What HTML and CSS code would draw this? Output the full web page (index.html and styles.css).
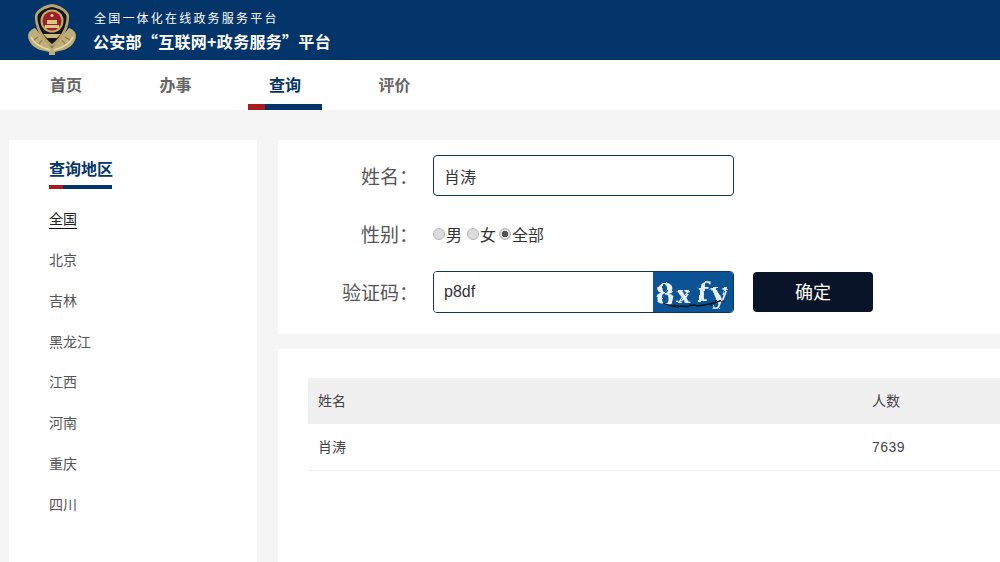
FILE: index.html
```html
<!DOCTYPE html>
<html lang="zh-CN">
<head>
    <meta charset="UTF-8" />
    <title>公安部“互联网+政务服务”平台</title>
    <link rel="stylesheet" href="styles.css">
</head>
<body>

    <header class="top-bar">
        <svg class="emblem" width="50" height="52" viewBox="0 0 50 52">
            <path d="M1 31C2 27 5 25 8 24L25 44L42 24C45 25 48 27 49 31C49 39 42 46 32 47L28 48V51H22V48L18 47C8 46 1 39 1 31Z" fill="#bfae78"/>
            <path d="M4 33C8 41 15 44 23 46M46 33C42 41 35 44 27 46" stroke="#e8dcae" stroke-width="1.6" fill="none"/>
            <path d="M7 36L11 33M12 40L15 36M38 33L43 36M35 36L38 40" stroke="#8d7c4a" stroke-width="1.2"/>
            <path d="M25 0C32 1 40 5 42 11C43 23 36 36 25 43C14 36 7 23 8 11C10 5 18 1 25 0Z" fill="#b7a56c"/>
            <path d="M25 3C31 4 38 7 39.500 12C40 22 34 33 25 40C16 33 10 22 10.500 12C12 7 19 4 25 3Z" fill="#14131c"/>
            <circle cx="25" cy="17" r="11.500" fill="#c4ab66"/>
            <circle cx="25" cy="17" r="9.500" fill="#9c1f2a"/>
            <path d="M18 21H32V24H18ZM20 16H30V20H20Z" fill="#dcc785"/>
            <circle cx="25" cy="11.500" r="1.600" fill="#e6d28e"/>
            <path d="M16 30H34L30 34H20Z" fill="#cdb97c"/>
        </svg>
        <div class="site-name">
            <p class="site-sub">全国一体化在线政务服务平台</p>
            <p class="site-title">公安部“互联网+政务服务”平台</p>
        </div>
    </header>

    <nav class="main-nav">
        <a href="#">首页</a>
        <a href="#">办事</a>
        <a href="#" class="active">查询</a>
        <a href="#">评价</a>
    </nav>

    <div class="page">
        <aside class="sidebar">
            <h2>查询地区</h2>
            <ul class="area-list">
                <li class="current">全国</li>
                <li>北京</li>
                <li>吉林</li>
                <li>黑龙江</li>
                <li>江西</li>
                <li>河南</li>
                <li>重庆</li>
                <li>四川</li>
            </ul>
        </aside>

        <main class="content">
            <section class="search-panel">
                <div class="form-row">
                    <label for="name">姓名：</label>
                    <input type="text" id="name" class="name-input" value="肖涛">
                </div>
                <div class="form-row gender-row">
                    <label>性别：</label>
                    <div class="radios">
                        <input type="radio" name="gender" id="male"><label for="male">男</label>
                        <input type="radio" name="gender" id="female"><label for="female">女</label>
                        <input type="radio" name="gender" id="all" checked><label for="all">全部</label>
                    </div>
                </div>
                <div class="form-row captcha-row">
                    <label for="code">验证码：</label>
                    <div class="captcha-box">
                        <input type="text" id="code" value="p8df">
                        <svg class="captcha" width="80" height="40" viewBox="0 0 80 40">
                            <defs>
                                <filter id="rough" x="-5%" y="-5%" width="110%" height="110%">
                                    <feTurbulence type="fractalNoise" baseFrequency="0.09" numOctaves="2" seed="4"/>
                                    <feDisplacementMap in="SourceGraphic" scale="5"/>
                                </filter>
                            </defs>
                            <rect width="80" height="40" fill="#0b5394"/>
                            <g filter="url(#rough)">
                                <text x="2" y="32" class="captcha-text big">8</text>
                                <text x="24" y="31" class="captcha-text">x</text>
                                <text x="44" y="30" class="captcha-text big">f</text>
                                <text x="58" y="31" class="captcha-text big">y</text>
                                <path d="M10 31C26 36 48 36 70 28" stroke="#10141c" stroke-width="1.800" fill="none"/>
                            </g>
                        </svg>
                    </div>
                    <button>确定</button>
                </div>
            </section>

            <section class="result-panel">
                <table>
                    <thead>
                        <tr><th class="col-name">姓名</th><th>人数</th></tr>
                    </thead>
                    <tbody>
                        <tr><td>肖涛</td><td class="num">7639</td></tr>
                    </tbody>
                </table>
            </section>
        </main>
    </div>

</body>
</html>
```

FILE: styles.css
```css
* {
    box-sizing: border-box;
    margin: 0;
    padding: 0;
    font-family: "Liberation Sans", "Noto Sans CJK SC", sans-serif;
}

html, body {
    height: 562px;
    overflow: hidden;
}

body {
    background: #f5f5f5;
    color: #333;
}

.top-bar {
    display: flex;
    align-items: center;
    height: 60px;
    padding-left: 27px;
    background: #03346a;
    color: #fff;
}

.emblem {
    flex: none;
    margin-right: 16px;
}

.site-name {
    padding-top: 2px;
}

.site-sub {
    font-size: 12px;
    line-height: 16px;
    letter-spacing: 2.2px;
    margin-left: 1px;
}

.site-title {
    font-family: "Noto Sans CJK SC", sans-serif;
    font-size: 16px;
    line-height: 22px;
    font-weight: bold;
    letter-spacing: 0.3px;
    margin-top: 3px;
}

.main-nav {
    display: flex;
    gap: 35.5px;
    height: 50px;
    padding-left: 29px;
    background: #fff;
}

.main-nav a {
    position: relative;
    width: 74px;
    font-size: 16px;
    font-weight: bold;
    line-height: 51px;
    text-align: center;
    text-decoration: none;
    color: #666;
}

.main-nav a.active {
    color: #03346a;
}

.main-nav a.active::after {
    content: "";
    position: absolute;
    left: 0;
    right: 0;
    bottom: 0;
    height: 6px;
    background: linear-gradient(90deg, #a81c1f 17px, #03346a 17px);
}

.page {
    display: flex;
    gap: 21px;
    padding: 30px 0 0 9px;
}

.sidebar {
    flex: none;
    width: 248px;
    height: 422px;
    padding: 20px 0 0 40px;
    background: #fff;
}

.sidebar h2 {
    width: 63px;
    padding-bottom: 5px;
    border-bottom: 4px solid;
    border-image: linear-gradient(90deg, #a81c1f 15px, #03346a 15px) 1;
    font-size: 16px;
    line-height: 20px;
    white-space: nowrap;
    color: #03346a;
}

.area-list {
    list-style: none;
}

.area-list li {
    width: max-content;
    margin-top: 20.75px;
    font-size: 14px;
    line-height: 20px;
    color: #555;
}

.area-list li.current {
    margin-top: 21px;
    margin-bottom: 21px;
    border-bottom: 1px solid #111;
    color: #222;
    line-height: 18px;
}

.area-list li.current + li {
    margin-top: 0;
}

.content {
    flex: 1;
    min-width: 0;
    display: flex;
    flex-direction: column;
    gap: 15px;
}

.search-panel {
    height: 194px;
    padding-top: 15px;
    background: #fff;
}

.form-row {
    display: flex;
    align-items: center;
}

.form-row > label {
    width: 140px;
    margin-right: 15px;
    font-size: 19px;
    color: #555;
    text-align: right;
}

.gender-row > label,
.captcha-row > label {
    padding-bottom: 2px;
}

.name-input {
    width: 301px;
    height: 41px;
    padding: 0 10px;
    border: 1px solid #0f3557;
    border-radius: 4px;
    font-size: 16px;
    color: #333;
    outline: none;
}

.gender-row {
    height: 26px;
    margin-top: 25px;
}

.radios {
    display: flex;
    align-items: center;
    font-size: 16px;
    color: #333;
}

.radios input {
    appearance: none;
    width: 12px;
    height: 12px;
    margin-right: 1px;
    border: 1px solid #b5b5b5;
    border-radius: 50%;
    background: #dcdcdc;
}

.radios input:checked {
    background: radial-gradient(circle, #555 0 3px, #dcdcdc 3.5px);
}

.radios label {
    margin-right: 5px;
}

.radios label[for="female"] {
    margin-right: 3px;
}

.captcha-row {
    margin-top: 24px;
}

.captcha-box {
    display: flex;
    width: 301px;
    height: 42px;
    border: 1px solid #0f3557;
    border-radius: 4px;
    overflow: hidden;
}

.captcha-box input {
    width: 219px;
    border: none;
    padding: 0 10px;
    font-size: 16px;
    color: #333;
    outline: none;
}

.captcha {
    flex: none;
}

.captcha-text {
    font-family: "DejaVu Serif", serif;
    font-size: 22px;
    font-weight: bold;
    fill: #eaf2f8;
}

.captcha-text.big {
    font-size: 28px;
}

button {
    width: 120px;
    height: 40px;
    margin-left: 19px;
    padding-bottom: 2px;
    border: none;
    border-radius: 4px;
    background: #0a1428;
    color: #fff;
    font-size: 18px;
    cursor: pointer;
}

.result-panel {
    height: 213px;
    padding: 29px 0 0 30px;
    background: #fff;
}

table {
    width: 100%;
    border-collapse: collapse;
    font-size: 14px;
    color: #444;
}

th, td {
    height: 46px;
    padding: 0 10px 2px;
    font-weight: normal;
    text-align: left;
}

th {
    background: #f0f0f0;
}

.col-name {
    width: 554px;
}

td {
    border-bottom: 1px solid #eee;
}

.num {
    padding-bottom: 0;
    letter-spacing: 0.5px;
}
```
